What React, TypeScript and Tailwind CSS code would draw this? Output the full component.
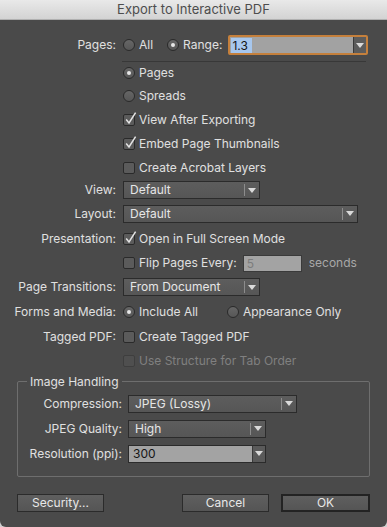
import React from 'react';

const font = { fontFamily: 'Inter, "Liberation Sans", Arial, sans-serif' };

function Check({ checked = false, disabled = false }: { checked?: boolean; disabled?: boolean }) {
  return (
    <span
      className={`relative block w-[12px] h-[12px] shrink-0 rounded-[2px] border ${
        disabled ? 'border-[#3e3e3e] bg-[#4f4f4f]' : 'border-[#2a2a2a] bg-[#5b5b5b]'
      }`}
    >
      {checked && (
        <svg className="absolute -top-[4px] left-[0px]" width="14" height="15" viewBox="0 0 14 15">
          <path d="M2.2 8.6 L5 12 L11.6 1.6" fill="none" stroke="#e4e4e4" strokeWidth="1.5" />
        </svg>
      )}
    </span>
  );
}

function Radio({ selected = false }: { selected?: boolean }) {
  return (
    <span className="flex items-center justify-center w-[12px] h-[12px] shrink-0 rounded-full border border-[#2a2a2a] bg-gradient-to-b from-[#666666] to-[#575757]">
      {selected && <span className="block w-[4px] h-[4px] rounded-full bg-[#e8e8e8]" />}
    </span>
  );
}

function Arrow() {
  return (
    <svg width="8" height="5" viewBox="0 0 8 5">
      <path d="M0 0 H8 L4 5 Z" fill="#dadada" />
    </svg>
  );
}

function Select({ value, className }: { value: string; className: string }) {
  return (
    <div className={`flex h-[18px] border border-[#2b2b2b] bg-gradient-to-b from-[#5d5d5d] to-[#565656] ${className}`}>
      <span className="flex-1 pl-[6px] leading-[16px] text-[#e6e6e6]">{value}</span>
      <span className="flex items-center pr-[3px]">
        <span className="block w-[1px] h-[12px] bg-[#8c8c8c] mr-[3px]" />
        <Arrow />
      </span>
    </div>
  );
}

function Row({ label, h, children }: { label?: string; h: string; children: React.ReactNode }) {
  return (
    <div className={`flex items-center ${h}`}>
      <span className="w-[117px] text-right pr-[1px] text-[#e0e0e0] whitespace-nowrap">{label}</span>
      <div className="flex items-center ml-[6px]">{children}</div>
    </div>
  );
}

function Opt({ children, disabled = false }: { children: React.ReactNode; disabled?: boolean }) {
  return <span className={`ml-[4px] whitespace-nowrap ${disabled ? 'text-[#808080]' : 'text-[#e0e0e0]'}`}>{children}</span>;
}

function GroupRow({ label, children }: { label: string; children: React.ReactNode }) {
  return (
    <div className="flex items-center h-[25px]">
      <span className="w-[104px] text-right text-[#e0e0e0] whitespace-nowrap">{label}</span>
      <div className="ml-[6px] flex">{children}</div>
    </div>
  );
}

function Button({ children, primary = false }: { children: React.ReactNode; primary?: boolean }) {
  return (
    <button
      className={`h-[18px] text-[#e8e8e8] bg-gradient-to-b from-[#5f5f5f] to-[#555555] leading-[14px] ${
        primary ? 'w-[89px] border-2 border-[#232323]' : 'w-[87px] border border-[#2b2b2b]'
      }`}
    >
      {children}
    </button>
  );
}

export default function App() {
  return (
    <div className="w-[387px] h-[527px] bg-[#cfcfcf] text-[12px]" style={font}>
      <div className="h-full flex flex-col bg-[#4a4a4a] rounded-b-[6px] overflow-hidden">
        <div className="h-[20px] shrink-0 flex items-center justify-center bg-gradient-to-b from-[#e9e9e9] to-[#d3d3d3] border-b border-[#b0b0b0] text-[#4d4d4d] text-[13px]">
          Export to Interactive PDF
        </div>

        <div className="mt-[15px] flex items-center h-[20px]">
          <span className="w-[117px] text-right pr-[1px] text-[#e0e0e0]">Pages:</span>
          <div className="ml-[6px] flex items-center">
            <Radio />
            <Opt>All</Opt>
            <span className="ml-[14px] flex items-center">
              <Radio selected />
              <Opt>Range:</Opt>
            </span>
            <div className="ml-[6px] w-[140px] h-[20px] rounded-[2px] border-2 border-[#c5803c] flex">
              <div className="flex-1 bg-[#a2a2a2] flex items-center pl-[1px]">
                <span className="bg-[#a7c7ee] text-[#151515] leading-[15px] px-[1px] pr-[4px]">1.3</span>
              </div>
              <span className="w-[13px] flex items-center justify-center bg-[#5c5c5c] border-l border-[#3a3a3a]">
                <Arrow />
              </span>
            </div>
          </div>
        </div>

        <div className="ml-[122px] mt-[6px] w-[244px] h-[1px] bg-[#383838]" />

        <Row h="h-[22px]"><Radio selected /><Opt>Pages</Opt></Row>
        <Row h="h-[24px]"><Radio /><Opt>Spreads</Opt></Row>
        <Row h="h-[24px]"><Check checked /><Opt>View After Exporting</Opt></Row>
        <Row h="h-[24px]"><Check checked /><Opt>Embed Page Thumbnails</Opt></Row>
        <Row h="h-[23px]"><Check /><Opt>Create Acrobat Layers</Opt></Row>
        <Row label="View:" h="h-[22px]"><Select value="Default" className="w-[137px]" /></Row>
        <Row label="Layout:" h="h-[25px]"><Select value="Default" className="w-[235px]" /></Row>
        <Row label="Presentation:" h="h-[25px]"><Check checked /><Opt>Open in Full Screen Mode</Opt></Row>
        <Row h="h-[24px]">
          <Check />
          <Opt>Flip Pages Every:</Opt>
          <span className="ml-[6px] w-[59px] h-[17px] bg-[#a3a3a3] border border-[#3a3a3a] text-[#7c7c7c] pl-[3px] leading-[15px]">5</span>
          <span className="ml-[7px] text-[#a8a8a8]">seconds</span>
        </Row>
        <Row label="Page Transitions:" h="h-[24px]"><Select value="From Document" className="w-[137px]" /></Row>
        <Row label="Forms and Media:" h="h-[25px]">
          <Radio selected />
          <Opt>Include All</Opt>
          <span className="ml-[29px] flex items-center">
            <Radio />
            <Opt>Appearance Only</Opt>
          </span>
        </Row>
        <Row label="Tagged PDF:" h="h-[25px]"><Check /><Opt>Create Tagged PDF</Opt></Row>
        <Row h="h-[24px]"><Check disabled /><Opt disabled>Use Structure for Tab Order</Opt></Row>

        <div className="relative mt-[8px] ml-[17px] w-[353px] h-[96px] border border-[#6e6e6e] rounded-[2px] pt-[9px] pl-[0px]">
          <span className="absolute -top-[8px] left-[9px] px-[3px] bg-[#4a4a4a] text-[#e0e0e0] leading-[15px]">Image Handling</span>
          <GroupRow label="Compression:"><Select value="JPEG (Lossy)" className="w-[169px]" /></GroupRow>
          <GroupRow label="JPEG Quality:"><Select value="High" className="w-[138px]" /></GroupRow>
          <GroupRow label="Resolution (ppi):">
            <div className="flex h-[18px] w-[138px] border border-[#2b2b2b]">
              <span className="flex-1 bg-[#a3a3a3] pl-[4px] leading-[16px] text-[#151515]">300</span>
              <span className="w-[13px] flex items-center justify-center bg-[#5a5a5a] border-l border-[#3a3a3a]">
                <Arrow />
              </span>
            </div>
          </GroupRow>
        </div>

        <div className="mt-[17px] flex items-center pl-[17px]">
          <Button>Security...</Button>
          <span className="ml-[78px]"><Button>Cancel</Button></span>
          <span className="ml-[12px]"><Button primary>OK</Button></span>
        </div>
      </div>
    </div>
  );
}
